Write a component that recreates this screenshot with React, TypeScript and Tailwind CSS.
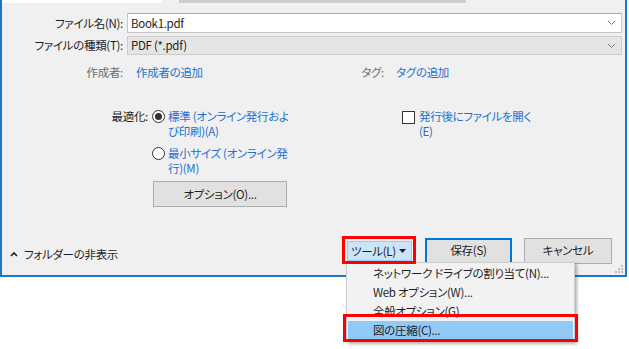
import React from "react"

const link = "text-[#1f6fcf]"

function Chevron() {
  return (
    <svg width="9" height="6" viewBox="0 0 9 6" className="shrink-0">
      <polyline points="1,1 4.5,4.5 8,1" fill="none" stroke="#7a7a7a" strokeWidth="1" />
    </svg>
  )
}

function Radio({ checked }: { checked?: boolean }) {
  return (
    <div className="w-[13px] h-[13px] rounded-full border border-[#333] bg-white flex items-center justify-center shrink-0">
      {checked && <div className="w-[7px] h-[7px] rounded-full bg-[#333]" />}
    </div>
  )
}

const menuItems = [
  "ネットワーク ドライブの割り当て(N)...",
  "Web オプション(W)...",
  "全般オプション(G)...",
  "図の圧縮(C)...",
]

export default function App() {
  return (
    <div className="relative w-[629px] h-[349px] bg-white overflow-hidden whitespace-nowrap font-['Noto_Sans_CJK_JP','Noto_Sans',sans-serif] text-[11.5px] tracking-[-0.3px] text-[#1e1e1e] [font-feature-settings:'palt']">
      {/* dialog */}
      <div className="relative w-[627px] h-[277px] border-l-2 border-r-2 border-b-2 border-[#1a78c8] bg-[#f0f0f0] flex flex-col">
        <div className="h-[4px] flex">
          <div className="w-[160px] h-[3px] bg-white" />
          <div className="ml-[17px] w-[287px] h-[3px] bg-[#cdcdcd]" />
        </div>

        {/* file name */}
        <div className="mt-[9px] h-[20px] flex items-center">
          <div className="w-[121px] text-right leading-[15px]">ファイル名(N):</div>
          <div className="ml-[4px] mr-[3px] flex-1 h-full bg-white border border-[#c6c6c6] border-t-[#a9a9a9] flex items-center justify-between pl-[3px] pr-[5px]">
            <span className="leading-[15px]">Book1.pdf</span>
            <Chevron />
          </div>
        </div>

        {/* file type */}
        <div className="mt-[3px] h-[19px] flex items-center">
          <div className="w-[121px] text-right leading-[15px]">ファイルの種類(T):</div>
          <div className="ml-[4px] mr-[3px] flex-1 h-full bg-[#e5e5e5] border border-[#cccccc] flex items-center justify-between pl-[3px] pr-[5px]">
            <span className="leading-[15px]">PDF (*.pdf)</span>
            <Chevron />
          </div>
        </div>

        {/* author / tags */}
        <div className="mt-[10px] h-[15px] flex items-center leading-[15px]">
          <div className="w-[121px] text-right text-[#6d6d6d]">作成者:</div>
          <div className={`ml-[13px] w-[216px] ${link}`}>作成者の追加</div>
          <div className="w-[32px] text-right text-[#6d6d6d]">タグ:</div>
          <div className={`ml-[12px] ${link}`}>タグの追加</div>
        </div>

        {/* optimize */}
        <div className="mt-[29px] flex leading-[15px]">
          <div className="w-[146px] text-right">最適化:</div>
          <div className="ml-[4px] w-[250px] flex flex-col">
            <div className="flex">
              <div className="h-[15px] flex items-center"><Radio checked /></div>
              <div className={`ml-[3px] ${link}`}>標準 (オンライン発行およ<br />び印刷)(A)</div>
            </div>
            <div className="mt-[7px] flex">
              <div className="h-[15px] flex items-center"><Radio /></div>
              <div className={`ml-[3px] ${link}`}>最小サイズ (オンライン発<br />行)(M)</div>
            </div>
            <div className="mt-[5px] ml-[1px] w-[134px] h-[26px] bg-[#e1e1e1] border border-[#adadad] flex items-center justify-center">
              オプション(O)...
            </div>
          </div>
          <div className="flex">
            <div className="h-[15px] flex items-start">
              <div className="mt-[2px] w-[13px] h-[13px] border border-[#333] bg-white" />
            </div>
            <div className={`ml-[4px] ${link}`}>発行後にファイルを開く<br />(E)</div>
          </div>
        </div>

        {/* bottom row */}
        <div className="mt-[31px] h-[26px] flex items-center">
          <div className="ml-[8px] mt-[6px] flex items-center gap-[6px] leading-[15px]">
            <svg width="8" height="6" viewBox="0 0 8 6">
              <polyline points="1,5 4,2 7,5" fill="none" stroke="#222" strokeWidth="1.6" />
            </svg>
            <span>フォルダーの非表示</span>
          </div>
          <div className="ml-auto mr-[13px] flex items-center">
            <div className="w-[65px] h-[20px] bg-[#cce4f7] border border-[#9ccbf0] flex items-center pl-[3px] pr-[5px] justify-between">
              <span className="leading-[15px]">ツール(L)</span>
              <svg width="7" height="4" viewBox="0 0 7 4">
                <polygon points="0,0 7,0 3.5,4" fill="#222" />
              </svg>
            </div>
            <div className="ml-[13px] w-[87px] h-[26px] bg-[#e1e1e1] border-2 border-[#0078d7] flex items-center justify-center">
              保存(S)
            </div>
            <div className="ml-[12px] w-[88px] h-[26px] bg-[#e1e1e1] border border-[#adadad] flex items-center justify-center">
              キャンセル
            </div>
          </div>
        </div>

        {/* size grip */}
        <svg className="absolute right-[2px] bottom-[2px]" width="8" height="8" viewBox="0 0 8 8">
          <rect x="6" y="0" width="2" height="2" fill="#bdbdbd" />
          <rect x="3" y="3" width="2" height="2" fill="#bdbdbd" />
          <rect x="6" y="3" width="2" height="2" fill="#bdbdbd" />
          <rect x="0" y="6" width="2" height="2" fill="#bdbdbd" />
          <rect x="3" y="6" width="2" height="2" fill="#bdbdbd" />
          <rect x="6" y="6" width="2" height="2" fill="#bdbdbd" />
        </svg>
      </div>

      {/* tools menu */}
      <div className="absolute left-[346px] top-[262px] w-[229px] bg-[#f2f2f2] border border-[#cccccc] shadow-[2px_2px_3px_rgba(0,0,0,0.3)] py-[1px]">
        {menuItems.map((item, i) => (
          <div
            key={item}
            className={`mx-[1px] h-[19px] flex items-center pl-[25px] leading-[15px] ${i === 3 ? "bg-[#91c9f7]" : ""}`}
          >
            {item}
          </div>
        ))}
      </div>

      {/* annotation boxes */}
      <div className="absolute left-[342px] top-[236px] w-[74px] h-[28px] border-[3px] border-[#ff0000]" />
      <div className="absolute left-[343px] top-[314px] w-[235px] h-[28px] border-[3px] border-[#ff0000]" />
    </div>
  )
}
